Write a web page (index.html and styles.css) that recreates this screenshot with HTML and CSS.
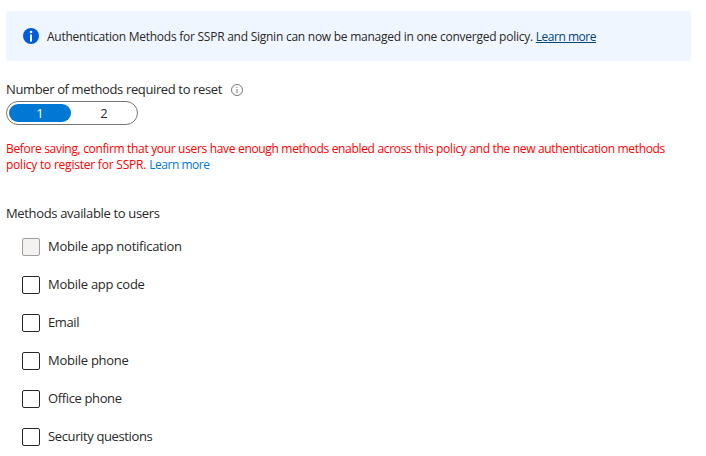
FILE: index.html
```html
<!DOCTYPE html>
<html lang="en">
<head>
<meta charset="utf-8">
<title>Authentication methods</title>
<link rel="stylesheet" href="styles.css">
</head>
<body>
<main class="page">
  <div class="banner">
    <svg class="banner-icon" width="16" height="16" viewBox="0 0 16 16"><circle cx="8" cy="8" r="8" fill="#015cda"/><circle cx="8" cy="4" r="1.3" fill="#fff"/><rect x="7" y="6.5" width="2" height="7" fill="#fff"/></svg>
    <p class="banner-text"><span class="banner-msg">Authentication Methods for SSPR and Signin can now be managed in one converged policy.</span> <a class="banner-link" href="#">Learn more</a></p>
  </div>
  <div class="field-label"><span class="field-text">Number of methods required to reset</span>
    <svg class="info" width="12" height="12" viewBox="0 0 12 12"><circle cx="6" cy="6" r="5.5" fill="none" stroke="#797775"/><path d="M6 5v4M6 3v1" stroke="#797775"/></svg>
  </div>
  <div class="toggle"><span class="option selected">1</span><span class="option">2</span></div>
  <p class="warning"><span class="warning-lead">Before saving, confirm that your users have enough methods enabled across this policy and the new authentication methods</span><br><span class="warning-end">policy to register for SSPR.</span> <a class="link" href="#">Learn more</a></p>
  <h2 class="heading">Methods available to users</h2>
  <ul class="methods">
    <li class="method"><span class="box disabled"></span><span class="name">Mobile app notification</span></li>
    <li class="method"><span class="box"></span><span class="name">Mobile app code</span></li>
    <li class="method"><span class="box"></span><span class="name tight">Email</span></li>
    <li class="method"><span class="box"></span><span class="name">Mobile phone</span></li>
    <li class="method"><span class="box"></span><span class="name tight">Office phone</span></li>
    <li class="method"><span class="box"></span><span class="name tight">Security questions</span></li>
  </ul>
</main>
</body>
</html>
```
FILE: styles.css
```css
* { box-sizing: border-box; }
body { margin: 0; background: #fff; color: #292827; font: 13px/16px "Segoe UI", "Open Sans", "Noto Sans", sans-serif; }
.page { width: 706px; height: 456px; padding: 11px 15px 0 6px; overflow: hidden; }
p, h2, ul { margin: 0; padding: 0; font-size: inherit; font-weight: 400; }
.banner { display: flex; align-items: center; height: 50px; padding: 0 17px; gap: 8px; border-radius: 2px; background: #f0f6ff; white-space: nowrap; }
.banner-text { padding-top: 2px; font-size: 12px; letter-spacing: -0.25px; }
.banner-link { color: #004578; letter-spacing: -0.48px; }
.field-label { display: flex; align-items: center; gap: 9px; height: 18px; margin-top: 20px; }
.field-text { padding-bottom: 2px; letter-spacing: -0.37px; }
.toggle { display: flex; width: 132px; height: 24px; margin-top: 2px; padding: 2px; border: 1px solid #797775; border-radius: 12px; }
.option { width: 66px; height: 18px; border-radius: 9px; line-height: 18px; text-align: center; }
.option.selected { flex: none; width: 62px; background: #0078d4; color: #fff; }
.warning { margin-top: 16px; color: #f00; font-size: 12px; white-space: nowrap; }
.warning-lead { letter-spacing: -0.325px; }
.warning-end { letter-spacing: -0.22px; }
.link { color: #0078d4; letter-spacing: -0.48px; text-decoration: none; }
.heading { margin-top: 32px; letter-spacing: -0.34px; }
.methods { margin: 17px 0 0 16px; list-style: none; }
.method { display: flex; align-items: center; gap: 8px; height: 18px; margin-bottom: 20px; }
.name { padding-bottom: 2px; letter-spacing: -0.26px; }
.name.tight { letter-spacing: -0.37px; }
.box { width: 18px; height: 18px; border: 1px solid #292827; border-radius: 2px; }
.box.disabled { border-color: #a19f9d; background: #f3f2f1; }
.option:last-child { flex: none; }
```
